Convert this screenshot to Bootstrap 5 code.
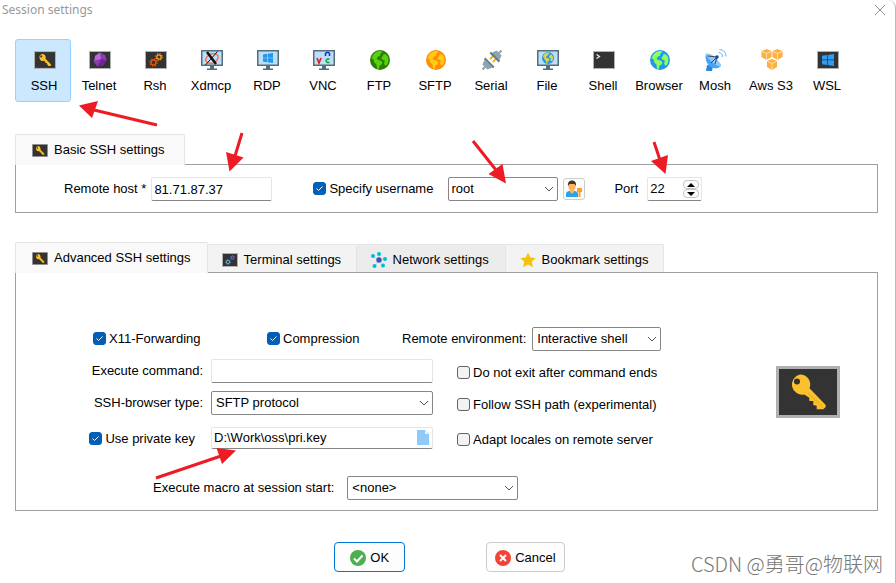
<!DOCTYPE html>
<html lang="en">
<head>
<meta charset="utf-8">
<meta name="viewport" content="width=device-width, initial-scale=1">
<title>Session settings</title>
<link href="https://cdn.jsdelivr.net/npm/bootstrap@5.3.0/dist/css/bootstrap.min.css" rel="stylesheet">
<style>
  body { font: 13px/16px "Liberation Sans", Arial, sans-serif; color: #000; background: #fff; }
  .session-window { min-height: 100vh; border-right: 1px solid #b9b9b9; border-top-right-radius: 8px; }
  .title-bar { height: 39px; padding: 1px 8px 0 2px; font: 12px/18px "Noto Sans", sans-serif; color: #999; }
  .close-btn { width: 14px; height: 18px; line-height: 0; }
  .window-body { padding: 0 17px 0 15px; }
  .type-btn { width: 56px; height: 63px; padding: 8px 0 0; border: 1px solid transparent; border-radius: 3px; background: none; color: #000; white-space: nowrap; display: flex; flex-direction: column; align-items: center; gap: 6px; }
  .type-btn.active { background: #cce8ff; border-color: #99d1ff; padding-left: 2px; }
  .type-btn svg { flex: none; margin-left: 2px; }
  .tab-icon { flex: none; }
  .basic-group { margin-top: 32px; }
  .advanced-group { margin-top: 29px; }
  .nav-tabs { border: 0; }
  .nav-tabs .nav-link { display: flex; align-items: center; gap: 6px; min-width: 149px; height: 28px; margin: 0; padding: 2px 14px 0; border: 1px solid #e5e5e5; border-width: 1px 1px 0 0; border-radius: 0 2px 0 0; background: #f3f3f3; color: #000; }
  .nav-tabs .nav-link.hovered { background: #ececec; }
  .nav-tabs .nav-link.active { position: relative; height: 31px; margin-bottom: -1px; padding: 0 16px; border-width: 1px 1px 0 1px; border-radius: 2px 2px 0 0; border-color: #e5e5e5; background: #f9f9f9; color: #000; }
  .basic-group .nav-link { min-width: 170px; }
  .panel { border: 1px solid #a0a0a0; }
  .basic-panel { padding: 12px 16px 11px 48px; }
  .advanced-panel { padding: 54px 37px 10px 58px; }
  .form-control, .form-select, .field-box { height: 24px; padding: 0 2px; font-size: 13px; line-height: 16px; color: #000; background-color: #fff; border: 1px solid #e5e5e5; border-bottom-color: #868686; border-radius: 2px; }
  .form-select { padding: 0 24px 0 4px; border-color: #868686; background-image: url("data:image/svg+xml,%3Csvg xmlns='http://www.w3.org/2000/svg' viewBox='0 0 10 6'%3E%3Cpath d='M1 1l4 4 4-4' fill='none' stroke='%23555'/%3E%3C/svg%3E"); background-size: 10px 6px; background-position: right 3px center; }
  .form-select.user-select { width: 110px; padding-left: 2px; }
  .field-box input { border: 0; padding: 0; min-width: 0; outline: 0; color: #000; }
  .host-input { width: 121px; margin-left: 5px; }
  .port-box { width: 55px; }
  .port-box input { width: 32px; }
  .spin-btn { width: 16px; height: 9px; padding: 0; border: 1px solid #c4c4c4; border-radius: 4px; background: #fdfdfd; line-height: 0; display: flex; justify-content: center; align-items: center; }
  .user-btn { width: 22px; height: 22px; margin-left: 5px; padding: 0; border: 1px solid #ccc; border-radius: 3px; background: #fdfdfd; line-height: 0; }
  .tick { display: flex; align-items: center; gap: 3px; }
  .tick .form-check-input { width: 13px; height: 13px; margin: 0 0 1px; border: 1px solid #626262; border-radius: 3px; background-color: #f3f3f3; flex: none; }
  .tick .form-check-input:checked { background-color: #005fb8; border-color: #005fb8; background-image: url("data:image/svg+xml,%3Csvg xmlns='http://www.w3.org/2000/svg' viewBox='0 0 11 11'%3E%3Cpath d='M2.5 5.5l2 2 4-4' fill='none' stroke='%23fff'/%3E%3C/svg%3E"); }
  .user-tick { margin: 0 15px 0 41px; }
  .port-label { margin: 0 9px 0 29px; }
  .options-row { padding-left: 19px; height: 24px; }
  .option-x11 { width: 174px; }
  .option-compression { width: 135px; }
  .env-select { width: 129px; margin-left: 6px; }
  .option-grid { display: grid; grid-template-columns: 129px 222px auto; grid-template-rows: 24px 24px 30px; gap: 8px; align-items: center; margin-top: 8px; }
  .option-grid .tick { margin-left: 16px; padding-top: 3px; }
  .option-grid .key-tick { margin: 0 8px 0 0; padding-top: 1px; }
  .key-box { height: 22px; }
  .macro-row { margin-top: 23px; padding-left: 79px; }
  .macro-select { width: 171px; margin-left: 13px; }
  .type-image { margin-top: 39px; }
  .footer-row { margin-top: 31px; gap: 81px; }
  .dialog-btn { height: 30px; padding: 1px 8px 0; border: 1px solid #ccc; border-radius: 4px; background: #fdfdfd; color: #000; font-size: 13px; line-height: 16px; display: flex; align-items: center; gap: 4px; }
  .dialog-btn.ok { padding: 1px 15px 0; border-color: #0078d4; }
  .watermark { position: absolute; right: 12px; bottom: 7px; font: 300 20px/24px "Noto Sans CJK SC", sans-serif; color: #777; }
  .arrows { position: absolute; left: 0; top: 0; pointer-events: none; }
</style>
<script src="https://cdn.jsdelivr.net/npm/bootstrap@5.3.0/dist/js/bootstrap.bundle.min.js"></script>
</head>
<body>
<svg width="0" height="0" class="position-absolute" aria-hidden="true">
  <symbol id="keybox" viewBox="0 0 64 52">
    <rect width="64" height="52" fill="#b0b0b0"/><rect x="3" y="3" width="58" height="46" fill="#333"/>
    <path fill="#fbc02d" fill-rule="evenodd" d="M24 8.500a10 10 0 0 1 9.500 13.800L49.700 39v2l-2.400 2.300h-6.600v-3.600L37.300 39v-4h-4v-3.300l-5-3.200A10 10 0 1 1 24 8.500zM21 12.500a3 3 0 1 0 0 6 3 3 0 0 0 0-6z"/>
    <path d="M32 27l15.500 15" stroke="#e8a614" stroke-width="1"/>
  </symbol>
  <symbol id="term" viewBox="0 0 24 24"><path fill="#b0b0b0" d="M1 3h22v18H1z"/><path fill="#333" d="M2 4h20v16H2z"/></symbol>
  <symbol id="monitor" viewBox="0 0 24 24"><path fill="#546e7a" d="M1 2h22v16H1zM10 18h4v2.500h3V22H7v-1.500h3z"/><path fill="#bbdefb" d="M2.500 3.500h19v13h-19z"/></symbol>
  <symbol id="gear" viewBox="0 0 10 10"><circle cx="5" cy="5" r="2.700" fill="none" stroke="currentColor" stroke-width="1.600"/><circle cx="5" cy="5" r="4" fill="none" stroke="currentColor" stroke-width="1.400" stroke-dasharray="1.570 1.570"/></symbol>
  <symbol id="land" viewBox="0 0 20 20"><path fill="currentColor" d="M3 5C5 2 8 .7 11.500 1L12 2.500 10 4l.5 1.500-2 .8L6.500 8.500 8 10l2.500.5 2 2-1 2-2 1-.5 3.500-2-.5-.5-4-2.500-2.500L3.500 9l-2-.5zM13.500 4l2.500.5 2 2.500.5 4-1.500 4-2 .5-1-2.500 1-2-1-1-2-.5-.5-2 1.500-1.500z"/></symbol>
  <symbol id="win" viewBox="0 0 12 12"><path fill="currentColor" d="M0 1.700l5-.7v4.600H0zM5.700.9L12 0v5.600H5.700zM0 6.300h5V11l-5-.7zM5.700 6.300H12V12l-6.300-.9z"/></symbol>
  <symbol id="cube" viewBox="0 0 12 12"><path fill="#fbb040" d="M6 0l5.500 2.300v6.500L6 12 .5 8.800V2.300z"/><path d="M1 2.700l5 2.200 5-2.200M6 5v6.500" fill="none" stroke="#fff3d6" stroke-width=".8"/></symbol>
</svg>

<main class="session-window position-relative">
  <header class="title-bar d-flex justify-content-between">
    <span>Session settings</span>
    <button class="close-btn border-0 bg-transparent p-0" aria-label="Close"><svg width="14" height="14" viewBox="0 0 14 14"><path d="M2 2l10 10M12 2L2 12" stroke="#909090" fill="none"/></svg></button>
  </header>

  <div class="window-body">
    <nav class="d-flex flex-wrap" aria-label="Session type">
      <button class="type-btn active"><svg width="24" height="24" viewBox="0 0 24 24"><use href="#keybox" x="1" y="3" width="22" height="18"/></svg>SSH</button>
      <button class="type-btn"><svg width="24" height="24"><use href="#term"/><path fill="#8e3bb0" d="M12 4.500l5.500 3 1 5-3.500 5-5.500 1-4-5L7 8z"/><path fill="#b967d6" d="M12 4.500l1 6.500-6 1.500L7 8z"/><path fill="#6d2595" d="M13 11l5.500 1.500-3.500 5-5.500 1z"/></svg>Telnet</button>
      <button class="type-btn"><svg width="24" height="24"><use href="#term"/><use href="#gear" x="5" y="10" width="9" height="9" color="#e65100"/><use href="#gear" x="11" y="5" width="8" height="8" color="#f9a01b"/></svg>Rsh</button>
      <button class="type-btn"><svg width="24" height="24"><use href="#monitor"/><ellipse cx="12" cy="10.500" rx="6.500" ry="4.500" transform="rotate(-25 12 10.500)" fill="none" stroke="#f4774f" stroke-width="1.500"/><path d="M7 4l9 12" stroke="#111" stroke-width="2.500"/><path d="M17.500 3.500l-12 13.500" stroke="#111" stroke-width="1"/></svg>Xdmcp</button>
      <button class="type-btn"><svg width="24" height="24"><use href="#monitor"/><use href="#win" x="7" y="5" width="10" height="10" color="#2196f3"/></svg>RDP</button>
      <button class="type-btn"><svg width="24" height="24"><use href="#monitor"/><path d="M5 10l2 5 2-5" fill="none" stroke="#e02020" stroke-width="1.700"/><path d="M13.500 8V5.500l1-1h2l1 1V8" fill="none" stroke="#2222dd" stroke-width="1.500"/><path d="M17.500 11h-2l-1.200 1v1.500l1.200 1h2" fill="none" stroke="#13a030" stroke-width="1.500"/></svg>VNC</button>
      <button class="type-btn"><svg width="24" height="24"><circle cx="12" cy="12" r="10" fill="#2e7d0b"/><use href="#land" x="2" y="2" width="20" height="20" color="#55d40b"/></svg>FTP</button>
      <button class="type-btn"><svg width="24" height="24"><circle cx="12" cy="12" r="10" fill="#ff8c0a"/><use href="#land" x="2" y="2" width="20" height="20" color="#ffcc12"/></svg>SFTP</button>
      <button class="type-btn"><svg width="24" height="24"><g transform="rotate(45 12 12)"><path d="M12-1.500v4M12 21.500v4" stroke="#90a4ae" stroke-width="2"/><path d="M10 8v5M14 8v5" stroke="#ffb300" stroke-width="2"/><path fill="#90a4ae" d="M8.500 2h7l2 5.500h-11zM6.500 17h11l-2 5h-7z"/><path fill="#607d8b" d="M5.500 7h13v2h-13zM5.500 15h13v2h-13z"/></g></svg>Serial</button>
      <button class="type-btn"><svg width="24" height="24"><use href="#monitor"/><circle cx="12" cy="10" r="6" fill="#229ae8"/><use href="#land" x="6" y="4" width="12" height="12" color="#dfd34a"/></svg>File</button>
      <button class="type-btn"><svg width="24" height="24"><use href="#term"/><path d="M4.500 6.500l3 2-3 2" fill="none" stroke="#eee" stroke-width="1.200"/></svg>Shell</button>
      <button class="type-btn"><svg width="24" height="24"><circle cx="12" cy="12" r="10" fill="#2196f3"/><use href="#land" x="2" y="2" width="20" height="20" color="#8bff5a"/></svg>Browser</button>
      <button class="type-btn"><svg width="24" height="24"><path fill="#2f86d6" d="M3 17l6 1-1 5H2z"/><path fill="#42a5f5" d="M2 5.500L17 18c-4 4-10 2.500-13-1.500-2.500-3.500-3-8-2-11z"/><path fill="#90caf9" d="M2 5.500C5 5 10 7 13 11s5 6 4 7-6-1-9.500-4.500S1 7 2 5.500z"/><path d="M3.500 8l9.500 1-2 7M13 9l-6 6" fill="none" stroke="#37474f"/><circle cx="13" cy="9" r="1.700" fill="#0d47a1"/><path d="M14.500 4.500q4 0 4 4.500M15.500 1.500q6.500.5 6.500 7" fill="none" stroke="#64b5f6"/></svg>Mosh</button>
      <button class="type-btn"><svg width="24" height="24"><use href="#cube" x="1" y="1" width="11" height="11"/><use href="#cube" x="12" y="1" width="11" height="11"/><use href="#cube" x="6.500" y="11" width="11" height="11"/></svg>Aws S3</button>
      <button class="type-btn"><svg width="24" height="24"><use href="#term"/><use href="#win" x="6" y="6" width="12" height="12" color="#2f9df4"/></svg>WSL</button>
    </nav>

    <section class="basic-group">
      <ul class="nav nav-tabs align-items-end">
        <li class="nav-item"><button class="nav-link active"><svg class="tab-icon" width="16" height="13"><use href="#keybox"/></svg>Basic SSH settings</button></li>
      </ul>
      <div class="panel basic-panel d-flex align-items-center">
        <label for="host">Remote host *</label>
        <input id="host" class="form-control host-input" type="text" value="81.71.87.37">
        <div class="tick user-tick"><input class="form-check-input" type="checkbox" id="specify" checked><label for="specify">Specify username</label></div>
        <select class="form-select user-select" aria-label="Username"><option>root</option></select>
        <button class="user-btn" aria-label="Manage users"><svg width="18" height="18" viewBox="0 0 18 18"><path fill="#29a3e8" d="M1 17v-3q0-2.500 3-3h6q3 .500 3 3v3z"/><path fill="#ffb35c" d="M5 9h4v3l-2 2-2-2z"/><ellipse cx="7" cy="6.500" rx="3.600" ry="4.200" fill="#ffb35c"/><path fill="#45352f" d="M3 6C2.500 2 4.500.5 7 .5S11.500 2 11 6L9.500 4h-5z"/><path fill="#fba01a" d="M12 8h5v4h-1.500v5h-2v-5H12z"/></svg></button>
        <label for="port" class="port-label">Port</label>
        <div class="field-box port-box d-flex align-items-center justify-content-between">
          <input id="port" type="text" value="22">
          <span class="d-flex flex-column gap-0">
            <button class="spin-btn" aria-label="Increase port"><svg width="8" height="4"><path d="M0 4l4-4 4 4z"/></svg></button>
            <button class="spin-btn" aria-label="Decrease port"><svg width="8" height="4"><path d="M0 0l4 4 4-4z"/></svg></button>
          </span>
        </div>
      </div>
    </section>

    <section class="advanced-group">
      <ul class="nav nav-tabs align-items-end">
        <li class="nav-item"><button class="nav-link active"><svg class="tab-icon" width="16" height="13"><use href="#keybox"/></svg>Advanced SSH settings</button></li>
        <li class="nav-item"><button class="nav-link"><svg class="tab-icon" width="16" height="14"><path fill="#b0b0b0" d="M0 0h16v14H0z"/><path fill="#333" d="M1 1h14v12H1z"/><use href="#gear" x="3" y="6" width="6" height="6" color="#64b5f6"/><use href="#gear" x="8" y="2" width="5" height="5" color="#6f7ff0"/></svg>Terminal settings</button></li>
        <li class="nav-item"><button class="nav-link hovered"><svg class="tab-icon" width="16" height="16"><path d="M8 8V2M8 8L2 4M8 8l6-1M8 8l-4 6M8 8l4 5" stroke="#b9dfe8"/><g fill="#00bcd4"><circle cx="8" cy="2" r="2"/><circle cx="2" cy="4" r="2"/><circle cx="14" cy="7" r="2"/><circle cx="3.500" cy="14" r="2"/><circle cx="12" cy="13.500" r="2"/></g><circle cx="8" cy="8" r="2.700" fill="#3f51b5"/></svg>Network settings</button></li>
        <li class="nav-item"><button class="nav-link"><svg class="tab-icon" width="16" height="16"><path fill="#f4c20d" d="M8 .5l2.300 5 5.500.6-4.100 3.700 1.200 5.500L8 12.500l-4.900 2.800 1.200-5.500L.2 6.100l5.500-.6z"/></svg>Bookmark settings</button></li>
      </ul>
      <div class="panel advanced-panel d-flex justify-content-between align-items-start">
        <div>
          <div class="options-row d-flex align-items-center">
            <div class="tick option-x11"><input class="form-check-input" type="checkbox" id="x11" checked><label for="x11">X11-Forwarding</label></div>
            <div class="tick option-compression"><input class="form-check-input" type="checkbox" id="compression" checked><label for="compression">Compression</label></div>
            <label for="env">Remote environment:</label>
            <select id="env" class="form-select env-select"><option>Interactive shell</option></select>
          </div>
          <div class="option-grid">
            <label for="command" class="text-end">Execute command:</label>
            <input id="command" class="form-control" type="text">
            <div class="tick"><input class="form-check-input" type="checkbox" id="noexit"><label for="noexit">Do not exit after command ends</label></div>
            <label for="browser" class="text-end">SSH-browser type:</label>
            <select id="browser" class="form-select"><option>SFTP protocol</option></select>
            <div class="tick"><input class="form-check-input" type="checkbox" id="follow"><label for="follow">Follow SSH path (experimental)</label></div>
            <div class="tick key-tick justify-content-end"><input class="form-check-input" type="checkbox" id="usekey" checked><label for="usekey">Use private key</label></div>
            <div class="field-box key-box d-flex align-items-center">
              <input class="flex-grow-1" type="text" value="D:\Work\oss\pri.key" aria-label="Private key file">
              <button class="border-0 bg-transparent p-0 lh-1" aria-label="Browse for key"><svg class="d-block" width="14" height="16"><path fill="#90caf9" d="M1 0h8l4 4v11H1z"/><path fill="#e1f5fe" d="M9 0l4 4H9z"/></svg></button>
            </div>
            <div class="tick"><input class="form-check-input" type="checkbox" id="locales"><label for="locales">Adapt locales on remote server</label></div>
          </div>
          <div class="macro-row d-flex align-items-center">
            <label for="macro">Execute macro at session start:</label>
            <select id="macro" class="form-select macro-select"><option>&lt;none&gt;</option></select>
          </div>
        </div>
        <svg class="type-image flex-shrink-0" width="64" height="52" role="img" aria-label="SSH"><use href="#keybox"/></svg>
      </div>
    </section>
  </div>

  <footer class="footer-row d-flex justify-content-center ps-1">
    <button class="dialog-btn ok"><svg width="16" height="16"><circle cx="8" cy="8" r="8" fill="#4caf50"/><path d="M4 8.500l3 3 5.500-6" fill="none" stroke="#fff" stroke-width="2"/></svg>OK</button>
    <button class="dialog-btn"><svg width="16" height="16"><circle cx="8" cy="8" r="8" fill="#f44336"/><path d="M5 5l6 6M11 5l-6 6" stroke="#fff" stroke-width="2"/></svg>Cancel</button>
  </footer>
  <div class="watermark">CSDN @勇哥@物联网</div>

  <svg class="arrows" width="700" height="500" fill="#ed1c24" stroke="#ed1c24" aria-hidden="true">
    <g stroke-width="3"><path d="M157 125L94 110M242 133L235 156M473 141L496 170M654 142L660 160M156 478L221 456"/></g>
    <g stroke="none"><path d="M79 105.500L98 101l-6 17zM226 152l17.500 5.500-14 14zM488.500 174l14-10 3.500 19.500zM651 161l17-6-2.500 19zM216.500 448l5.500 16 14-13.500z"/></g>
  </svg>
</main>
</body>
</html>
